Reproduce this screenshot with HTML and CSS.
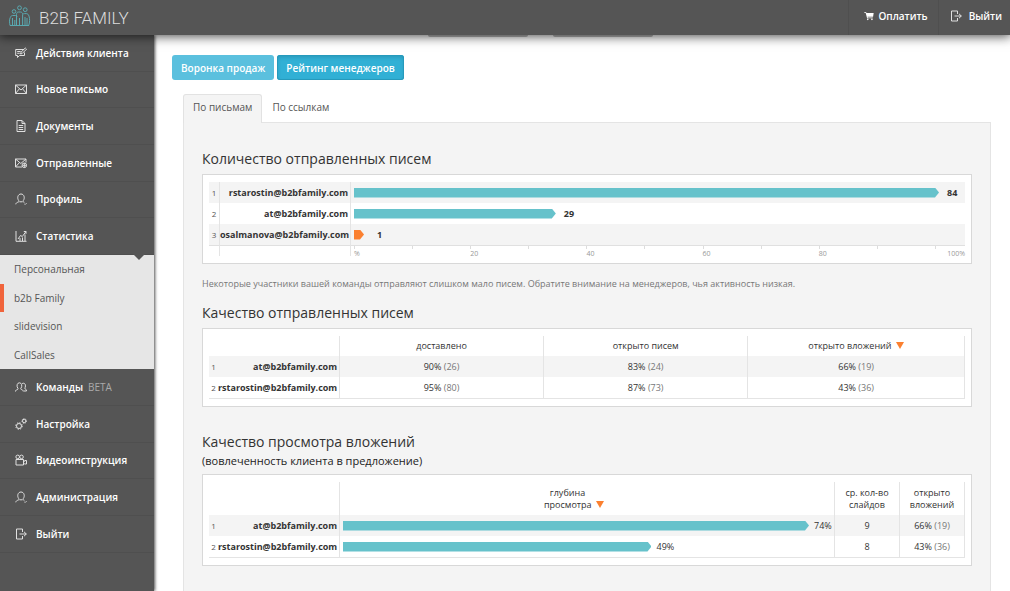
FILE: index.html
```html
<!DOCTYPE html>
<html lang="ru">
<head>
<meta charset="utf-8">
<meta name="viewport" content="width=device-width, initial-scale=1">
<title>B2B Family</title>
<link rel="stylesheet" href="styles.css">
</head>
<body>
<svg class="sprite" aria-hidden="true">
  <symbol id="i-actions" viewBox="0 0 12 12"><path d="M9 2.5H.7v6h1.8v2l2-2h5V5.5M2.2 4.5h3.5M2.2 6.3h2.5M5.5 7l.5-1.8L10.300 1l1.200 1.200L7.200 6.500z"/></symbol>
  <symbol id="i-mail" viewBox="0 0 12 12"><path d="M.5 2h11v8.500H.5zM.5 2 6 7l5.500-5M.5 10.500l4-4.800M11.500 10.500l-4-4.800"/></symbol>
  <symbol id="i-doc" viewBox="0 0 12 12"><path d="M2 .5h5l3 3v8H2zM7 .5v3h3M3.700 5.500h4.500M3.700 7.500h4.500M3.700 9.500h4.500"/></symbol>
  <symbol id="i-sent" viewBox="0 0 12 12"><path d="M7 10H.5V2h10.500v3.500M.5 2l5.300 4.500L11 2M.5 10l4-4.500"/><circle cx="9.300" cy="8.300" r="2.300"/><path d="M7.300 8.300h4M9.300 6v4.500"/></symbol>
  <symbol id="i-user" viewBox="0 0 12 12"><path d="M.8 11.300c.2-1.500 1.300-1.900 2.600-2.300.8-.3.7-1 .2-1.600C1.900 5 2.800 1 6 1s4.100 4 2.400 6.400c-.5.600-.7 1.200.2 1.600l.8.300M4.500 8.800h3M9.500 11l.700.500 1.300-1.300"/></symbol>
  <symbol id="i-stats" viewBox="0 0 12 12"><path d="M1 1v10.300h10.500M3 9l2.500-3.500 1.800 1L11 1.500M8.800 1.500H11v2.300M5 8v3M7.500 7.500v3.500M10 4.500v6.500"/></symbol>
  <symbol id="i-team" viewBox="0 0 12 12"><path d="M.5 10.500c.1-1.600 1.200-1.700 2.200-2.100.6-.3.4-.8 0-1.400-1.300-2-.7-5.200 1.700-5.200S7.400 5 6.100 7c-.4.600-.6 1.100 0 1.400 1 .4 2.100.5 2.200 2.100M7 2.700c2.200-1.300 4 .3 3.300 3.300-.2.900-.8 1.300-.4 1.700.9.400 1.500.7 1.600 2.300H9"/></symbol>
  <symbol id="i-gears" viewBox="0 0 12 12"><circle cx="4" cy="8" r="2.500"/><circle cx="4" cy="8" r="3.300" stroke-dasharray="1.300 1.300"/><circle cx="9.200" cy="3" r="1.700"/><circle cx="9.200" cy="3" r="2.300" stroke-dasharray=".9 .9"/></symbol>
  <symbol id="i-video" viewBox="0 0 12 12"><circle cx="2.700" cy="2.900" r="1.800"/><circle cx="6.500" cy="2.900" r="1.800"/><path d="M1 5.500h7.500v5.500H1zM8.500 7.500l1.300-.3V6.500h1.700V10H9.800l-1.300-.8"/></symbol>
  <symbol id="i-exit" viewBox="0 0 12 12"><path d="M7.500 4V1H1.500v10h6V8M4.500 6h6.800M9 3.800 11.300 6 9 8.200"/></symbol>
  <symbol id="i-cart" viewBox="0 0 12 12"><path class="solid" d="M.3 1.300h2.200l.4 1h8.700L10.900 7H4.300l.2.800h6v.9H3.700L2 2.200H.3z"/><circle class="solid" cx="4.500" cy="10" r="1"/><circle class="solid" cx="9.500" cy="10" r="1"/></symbol>
</svg>

<header class="topbar">
  <a class="brand" href="#">
    <svg class="brand__logo" viewBox="0 0 22 22" aria-hidden="true">
      <circle cx="10.500" cy="2.800" r="1.900"/><circle cx="5" cy="6.500" r="1.800"/><circle cx="16.200" cy="4.700" r="1.900"/>
      <path d="M1 20.500c-.6-3-.8-6 .3-8 .5-1.200 1.200-2 2.200-2h3c.9 0 1.300.6 1.600 1.300M7.500 20.500V9.500c0-1.600.8-2.500 2-2.500h2c1.400 0 2.100 1 2.100 2.500v11M13.800 9.500c.4-.6 1-.9 1.700-.9h1.800c1.300 0 2.200.9 2.700 2.500.9 3 .8 6-.3 9.400M1 20.500h19M3.500 13v7.500M5.800 15v5.500M10.500 13v7.500M16 12v8.500M18 13v7.500"/>
    </svg>
    <span class="brand__name">B2B FAMILY</span>
  </a>
  <nav class="topbar__links" aria-label="Аккаунт">
    <a class="topbar__link topbar__link--pay" href="#"><svg class="icon icon--small"><use href="#i-cart"/></svg>Оплатить</a>
    <a class="topbar__link topbar__link--exit" href="#"><svg class="icon"><use href="#i-exit"/></svg>Выйти</a>
  </nav>
</header>

<div class="layout">
  <nav class="sidebar" aria-label="Меню">
    <div class="menu menu--main">
      <a class="menu__item" href="#"><svg class="icon"><use href="#i-actions"/></svg>Действия клиента</a>
      <a class="menu__item" href="#"><svg class="icon"><use href="#i-mail"/></svg>Новое письмо</a>
      <a class="menu__item" href="#"><svg class="icon"><use href="#i-doc"/></svg>Документы</a>
      <a class="menu__item" href="#"><svg class="icon"><use href="#i-sent"/></svg>Отправленные</a>
      <a class="menu__item" href="#"><svg class="icon"><use href="#i-user"/></svg>Профиль</a>
      <a class="menu__item menu__item--open" href="#"><svg class="icon"><use href="#i-stats"/></svg>Статистика</a>
    </div>
    <div class="submenu">
      <a class="submenu__item" href="#">Персональная</a>
      <a class="submenu__item submenu__item--active" href="#">b2b Family</a>
      <a class="submenu__item" href="#">slidevision</a>
      <a class="submenu__item" href="#">CallSales</a>
    </div>
    <div class="menu menu--more">
      <a class="menu__item" href="#"><svg class="icon"><use href="#i-team"/></svg>Команды <span class="menu__beta">BETA</span></a>
      <a class="menu__item" href="#"><svg class="icon"><use href="#i-gears"/></svg>Настройка</a>
      <a class="menu__item" href="#"><svg class="icon"><use href="#i-video"/></svg>Видеоинструкция</a>
      <a class="menu__item" href="#"><svg class="icon"><use href="#i-user"/></svg>Администрация</a>
      <a class="menu__item" href="#"><svg class="icon"><use href="#i-exit"/></svg>Выйти</a>
    </div>
  </nav>

  <main class="content">
    <div class="filters"><span class="filters__edge"></span><span class="filters__edge"></span></div>
    <div class="actions">
      <button class="btn" type="button">Воронка продаж</button>
      <button class="btn btn--active" type="button">Рейтинг менеджеров</button>
    </div>

    <div class="tabs">
      <div class="tabs__list" role="tablist">
        <button class="tab tab--active" type="button" role="tab" aria-selected="true">По письмам</button>
        <button class="tab" type="button" role="tab" aria-selected="false">По ссылкам</button>
      </div>
      <div class="tabs__pane" role="tabpanel">

        <h2 class="title">Количество отправленных писем</h2>
        <div class="card">
          <table class="grid grid--count">
            <colgroup><col class="c-num"><col class="c-name"><col></colgroup>
            <tbody>
              <tr><td class="num line">1</td><th class="name line" scope="row">rstarostin@b2bfamily.com</th><td><div class="track"><span class="bar" style="width:100%"></span><b class="count">84</b></div></td></tr>
              <tr><td class="num line">2</td><th class="name line" scope="row">at@b2bfamily.com</th><td><div class="track"><span class="bar" style="width:34.5%"></span><b class="count">29</b></div></td></tr>
              <tr><td class="num line">3</td><th class="name line" scope="row">osalmanova@b2bfamily.com</th><td><div class="track"><span class="bar bar--low" style="width:1.2%"></span><b class="count count--low">1</b></div></td></tr>
            </tbody>
            <tfoot>
              <tr><td class="line"></td><td class="line"></td><td>
                <div class="axis"><span>%</span><span></span><span>20</span><span></span><span>40</span><span></span><span>60</span><span></span><span>80</span><span></span><span class="axis__end">100%</span></div>
              </td></tr>
            </tfoot>
          </table>
        </div>
        <p class="note">Некоторые участники вашей команды отправляют слишком мало писем. Обратите внимание на менеджеров, чья активность низкая.</p>

        <h2 class="title">Качество отправленных писем</h2>
        <div class="card">
          <table class="grid grid--quality">
            <colgroup><col class="c-num"><col class="c-name"><col class="c-metric"><col class="c-metric"><col></colgroup>
            <thead>
              <tr><td></td><td class="line"></td><th class="line" scope="col">доставлено</th><th class="line" scope="col">открыто писем</th><th class="line" scope="col">открыто вложений <span class="sort"></span></th></tr>
            </thead>
            <tbody>
              <tr><td class="num">1</td><th class="name line" scope="row">at@b2bfamily.com</th><td class="line">90% <span class="dim">(26)</span></td><td class="line">83% <span class="dim">(24)</span></td><td class="line">66% <span class="dim">(19)</span></td></tr>
              <tr><td class="num">2</td><th class="name line" scope="row">rstarostin@b2bfamily.com</th><td class="line">95% <span class="dim">(80)</span></td><td class="line">87% <span class="dim">(73)</span></td><td class="line">43% <span class="dim">(36)</span></td></tr>
            </tbody>
          </table>
        </div>

        <div class="heading">
          <h2 class="title">Качество просмотра вложений</h2>
          <p class="subtitle">(вовлеченность клиента в предложение)</p>
        </div>
        <div class="card">
          <table class="grid grid--views">
            <colgroup><col class="c-num"><col class="c-name"><col><col class="c-small"><col class="c-small"></colgroup>
            <thead>
              <tr><td></td><td class="line"></td><th class="line depth" scope="col">глубина<br>просмотра <span class="sort"></span></th><th class="line" scope="col">ср. кол-во<br>слайдов</th><th class="line" scope="col">открыто<br>вложений</th></tr>
            </thead>
            <tbody>
              <tr><td class="num">1</td><th class="name line" scope="row">at@b2bfamily.com</th><td class="line"><div class="track"><span class="bar" style="width:100%"></span><span class="share">74%</span></div></td><td class="line">9</td><td class="line">66% <span class="dim">(19)</span></td></tr>
              <tr><td class="num">2</td><th class="name line" scope="row">rstarostin@b2bfamily.com</th><td class="line"><div class="track"><span class="bar" style="width:66.2%"></span><span class="share">49%</span></div></td><td class="line">8</td><td class="line">43% <span class="dim">(36)</span></td></tr>
            </tbody>
          </table>
        </div>
      </div>
    </div>
  </main>
</div>
</body>
</html>
```
FILE: styles.css
```css
* { box-sizing: border-box; }

body {
  margin: 0;
  min-height: 100vh;
  display: flex;
  flex-direction: column;
  background: #fff;
  color: #333;
  font: 10px/16px "Open Sans", "Noto Sans", sans-serif;
}

a { color: inherit; text-decoration: none; }
button { font: inherit; cursor: pointer; }
h2, p { margin: 0; }

.sprite { position: absolute; width: 0; height: 0; }

.icon {
  flex: none;
  width: 12px;
  height: 12px;
  fill: none;
  stroke: #e0e0e0;
  stroke-width: 1;
}
.icon--small { width: 10px; height: 10px; }
.solid { fill: #fff; stroke: none; }

/* Top bar */
.topbar {
  position: sticky;
  top: 0;
  z-index: 2;
  display: flex;
  justify-content: space-between;
  height: 35px;
  background: #555;
  color: #fff;
  box-shadow: 0 0 11px 1px rgba(0, 0, 0, .75);
}
.brand { display: flex; align-items: center; gap: 8px; padding-left: 9px; }
.brand__logo {
  width: 22px;
  height: 22px;
  margin-bottom: 4px;
  fill: none;
  stroke: #5aa9b0;
  stroke-width: 1;
}
.brand__name { color: #ddd; font: 300 17px/34px Roboto, sans-serif; }
.topbar__links { display: flex; font-weight: 600; }
.topbar__link {
  display: flex;
  align-items: center;
  padding-bottom: 3px;
  border-left: 1px solid #4f4f4f;
}
.topbar__link--pay { gap: 4px; padding-left: 15px; padding-right: 10px; }
.topbar__link--exit { gap: 7px; padding-left: 11px; padding-right: 8px; }

.layout { flex: 1; display: flex; }

/* Sidebar */
.sidebar {
  z-index: 1;
  flex: none;
  width: 154px;
  background: #555;
  color: #fff;
  box-shadow: 1px 0 3px rgba(0, 0, 0, .7);
}
.menu { display: grid; grid-auto-rows: 1fr; font-weight: 600; }
.menu--main { min-height: 220px; }
.menu--more { min-height: 184px; }
.menu__item {
  position: relative;
  display: flex;
  align-items: center;
  gap: 9px;
  padding-left: 15px;
  border-bottom: 1px solid #4f4f4f;
}
.menu__item--open::after {
  content: "";
  position: absolute;
  right: 9px;
  top: 100%;
  border: 6px solid transparent;
  border-top-color: #555;
  border-bottom: 0;
}
.menu__beta { margin-left: -4px; color: #aaa; font-weight: 400; }

.submenu {
  display: grid;
  grid-auto-rows: 1fr;
  min-height: 114px;
  background: #e6e6e6;
  color: #555;
}
.submenu__item {
  display: flex;
  align-items: center;
  padding-left: 14px;
}
.submenu__item--active { padding-left: 10px; border-left: 4px solid #f0643c; }

/* Content */
.content {
  flex: 1;
  min-width: 0;
  display: flex;
  flex-direction: column;
  padding: 0 19px 0 18px;
}
.filters { display: flex; justify-content: center; gap: 25px; padding-right: 82px; }
.filters__edge { width: 100px; height: 2px; background: #bbb; border-radius: 0 0 3px 3px; }

.actions { display: flex; gap: 3px; margin-top: 18px; }
.btn {
  height: 25px;
  padding: 0 9px;
  border: 0;
  border-radius: 3px;
  background: #5bc0de;
  color: #fff;
  font-weight: 600;
}
.btn--active {
  background: #31b0d5;
  box-shadow: inset 0 0 0 1px #269abc, inset 0 2px 4px rgba(0, 0, 0, .15);
}

.tabs { flex: 1; display: flex; flex-direction: column; margin: 14px 0 0 11px; }
.tabs__list { display: flex; }
.tab {
  height: 28px;
  padding: 0 9px 3px;
  border: 1px solid transparent;
  border-bottom: 0;
  border-radius: 3px 3px 0 0;
  background: none;
  color: #555;
}
.tab--active {
  position: relative;
  height: 29px;
  margin-bottom: -1px;
  padding-bottom: 4px;
  border-color: #e2e2e2;
  background: #f4f4f4;
}
.tabs__pane {
  flex: 1;
  padding: 25px 18px;
  border: 1px solid #e4e4e4;
  border-bottom: 0;
  background: #f4f4f4;
}

.title { font-size: 14px; line-height: 22px; font-weight: 400; color: #333; }
.subtitle { font-size: 11px; line-height: 16px; color: #222; }
.heading { margin: 24px 0 5px; }
.note { margin: 12px 0 10px; color: #777; font-size: 9px; line-height: 16px; }

.card {
  margin-top: 4px;
  padding: 7px 6px;
  border: 1px solid #d8d8d8;
  background: #fff;
}
.heading + .card { margin-top: 0; }

/* Tables */
.grid {
  width: 100%;
  table-layout: fixed;
  border-collapse: separate;
  border-spacing: 0;
  font-size: 9px;
  line-height: 12px;
  text-align: center;
}
.grid th, .grid td { height: 21px; padding: 0; font-weight: 400; }
.grid .line { border-right: 1px solid #e4e4e4; }
.grid tbody tr:nth-child(odd) { background: #f4f4f4; }
.grid .name { padding-right: 2px; text-align: right; font-weight: 700; white-space: nowrap; }
.grid .num { font-size: 8px; color: #555; }
.c-num { width: 9px; }
.c-name { width: 122px; }
.grid--count .c-num { width: 11px; }
.grid--count .c-name { width: 131px; }
.c-metric { width: 27%; }
.c-small { width: 65px; }

.grid--quality tbody tr:last-child > *,
.grid--views tbody tr:last-child > * { height: 22px; border-bottom: 1px solid #e4e4e4; }
.grid--quality thead tr > * { height: 20px; }
.grid--views thead tr > * { height: 33px; }

.grid--count tfoot td { height: 11px; border-top: 1px solid #e0e0e0; }

.track { display: flex; align-items: center; padding: 0 26px 0 3px; }
.grid--views .track { padding-right: 25px; }
.bar {
  flex: none;
  height: 10px;
  background: #66c2cb;
  clip-path: polygon(0 0, calc(100% - 4px) 0, 100% 50%, calc(100% - 4px) 100%, 0 100%);
}
.bar--low { min-width: 10px; background: #fb8030; }
.count { margin-left: 8px; }
.count--low { margin-left: 13px; }
.share { margin-left: 5px; }

.axis {
  display: grid;
  grid-template-columns: repeat(10, 1fr) 30px;
  padding-left: 3px;
  color: #999;
  font-size: 7px;
  line-height: 7px;
  text-align: left;
}
.axis span {
  height: 10px;
  padding-top: 4px;
  background: linear-gradient(#ddd, #ddd) no-repeat 0 0 / 1px 3px;
}
.axis .axis__end { text-align: right; }

.dim { color: #777; }
.sort {
  display: inline-block;
  margin-left: 2px;
  border: 4px solid transparent;
  border-top: 7px solid #fb8030;
  border-bottom: 0;
}
.grid .depth { padding-right: 39px; }
.depth .sort { margin-right: -13px; }
```
